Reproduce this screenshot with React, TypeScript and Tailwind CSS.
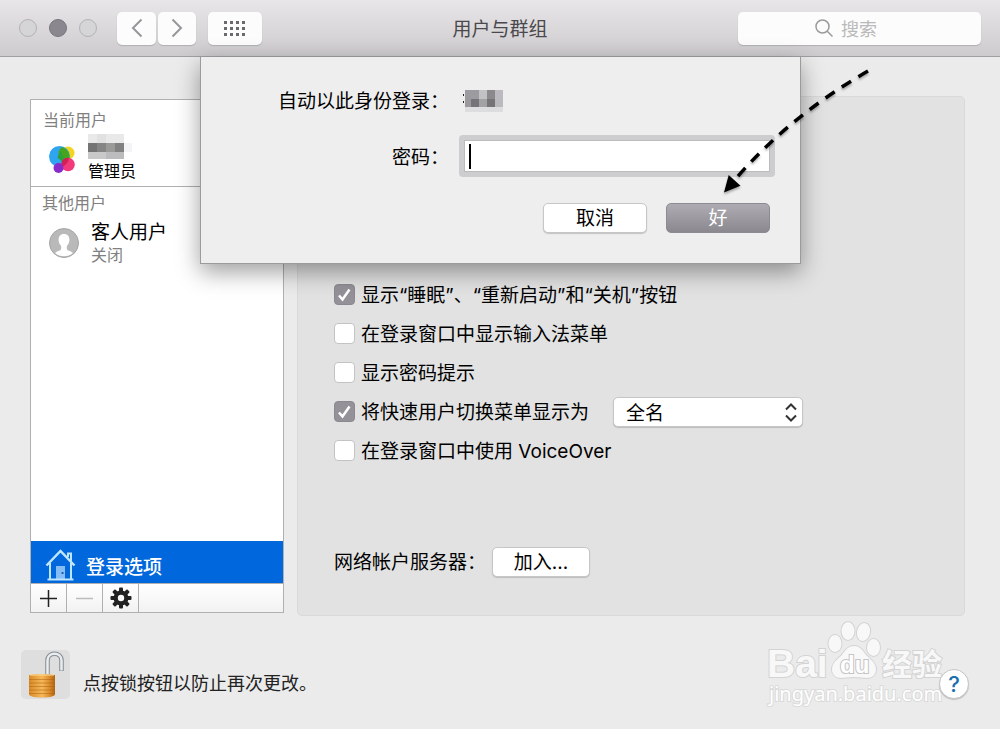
import { useState } from 'react';
import type { ReactNode } from 'react';

interface LoginOption {
  id: string;
  label: ReactNode;
  checked: boolean;
  hasMenu?: boolean;
}

const loginOptions: LoginOption[] = [
  { id: 'power-buttons', label: '显示“睡眠”、“重新启动”和“关机”按钮', checked: true },
  { id: 'input-menu', label: '在登录窗口中显示输入法菜单', checked: false },
  { id: 'password-hint', label: '显示密码提示', checked: false },
  { id: 'fast-switch', label: '将快速用户切换菜单显示为', checked: true, hasMenu: true },
  { id: 'voice-over', label: '在登录窗口中使用 VoiceOver', checked: false },
];

function TitleBar() {
  return (
    <header className="grid grid-cols-[1fr_auto_1fr] items-center h-[57px] px-[19px] border-b border-[#a19fa3] bg-linear-to-b from-[#e8e6e8] to-[#cdcbce]">
      <div className="flex items-center">
        <div className="flex gap-3 mr-5">
          <button aria-label="关闭" className="size-[18px] rounded-full border border-[#b4b2b5] bg-[#d5d4d6]" />
          <button aria-label="最小化" className="size-[18px] rounded-full border border-[#77757b] bg-[#8a888e]" />
          <button aria-label="缩放" className="size-[18px] rounded-full border border-[#b4b2b5] bg-[#d5d4d6]" />
        </div>
        <div className="flex gap-[2px] mr-3">
          <button aria-label="后退" className="flex items-center justify-center w-[39px] h-[33px] rounded-[5px] bg-[#fcfcfc] shadow-[0_1px_1px_#b0aeb1]">
            <svg width="12" height="20" viewBox="0 0 12 20" fill="none" stroke="#98969a" strokeWidth="2">
              <path d="M10.5 1.5 2 10l8.5 8.5" />
            </svg>
          </button>
          <button aria-label="前进" className="flex items-center justify-center w-[38px] h-[33px] rounded-[5px] bg-[#fcfcfc] shadow-[0_1px_1px_#b0aeb1]">
            <svg width="12" height="20" viewBox="0 0 12 20" fill="none" stroke="#98969a" strokeWidth="2">
              <path d="M1.5 1.5 10 10l-8.5 8.5" />
            </svg>
          </button>
        </div>
        <button aria-label="显示全部" className="flex items-center justify-center w-[54px] h-[33px] rounded-[5px] bg-[#fcfcfc] shadow-[0_1px_1px_#b0aeb1]">
          <svg width="22" height="15" viewBox="0 0 22 15" fill="#6b696d">
            {[0, 6, 12].map((y) => [0, 6, 12, 18].map((x) => <rect key={`${x}-${y}`} x={x} y={y} width="3" height="3" />))}
          </svg>
        </button>
      </div>
      <h1 className="pt-1 text-[19px] text-[#4a484c]">用户与群组</h1>
      <label className="flex items-center justify-self-end gap-2 w-[243px] h-[33px] pl-[77px] rounded-[5px] bg-[#fcfcfc] shadow-[0_1px_1px_#b0aeb1]">
        <svg className="shrink-0" width="18" height="18" viewBox="0 0 18 18" fill="none" stroke="#9b9a9c" strokeWidth="1.5">
          <circle cx="7.5" cy="7.5" r="6.5" />
          <path d="m12 12 5.5 5.5" />
        </svg>
        <input type="search" aria-label="搜索" placeholder="搜索" className="w-full min-w-0 pt-[2px] text-[18px] outline-none placeholder:text-[#b9b9b9]" />
      </label>
    </header>
  );
}

function Sidebar() {
  return (
    <aside className="flex flex-col w-[254px] shrink-0 my-[3px] border border-[#b0b0b0] bg-white">
      {/* Current user */}
      <section className="h-[87px] pt-2 border-b border-[#b0b0b0]">
        <h2 className="pl-3 text-base leading-6 text-[#808080]">当前用户</h2>
        <div className="flex items-center gap-[13px] pl-[18px]">
          <svg className="mt-1" width="26" height="28" viewBox="0 0 26 28">
            <circle cx="19" cy="7" r="6.5" fill="#f2d520" />
            <circle cx="10.5" cy="10.5" r="10.5" fill="#2fa5f1" />
            <path d="M13 1a10.5 10.5 0 0 1 7.500 12.400A6.500 6.500 0 0 1 13 1Z" fill="#45a51e" />
            <path d="M12.800 5.200a6.500 6.500 0 0 0 6.700 8.200 10 10 0 0 1-5.800 7 9 9 0 0 0-5.200-8.400 9 9 0 0 1 4.300-6.800Z" fill="#2aa13a" />
            <circle cx="19" cy="18.5" r="6.8" fill="#f4387c" />
            <path d="M12.500 16.500a6.800 6.800 0 0 1 7.500-4.700 10.500 10.500 0 0 1-7 8.900Z" fill="#cf2156" />
            <circle cx="9.5" cy="22" r="5" fill="#8a2bc9" />
          </svg>
          <div>
            <svg className="block" width="44" height="27" viewBox="0 0 44 27" shapeRendering="crispEdges">
              <rect x="0" width="36" height="9" y="2" fill="#e9e9e9" />
              <rect x="9" width="9" height="9" y="2" fill="#e1e1e1" />
              <rect x="0" width="9" height="9" y="11" fill="#747474" />
              <rect x="9" width="9" height="9" y="11" fill="#858585" />
              <rect x="18" width="9" height="9" y="11" fill="#9a9a98" />
              <rect x="27" width="9" height="9" y="11" fill="#818181" />
              <rect x="36" width="8" height="9" y="11" fill="#f4f4f6" />
              <rect x="0" width="18" height="7" y="20" fill="#c9c9c9" />
              <rect x="18" width="18" height="7" y="20" fill="#bcbbbe" />
            </svg>
            <p className="text-base leading-6">管理员</p>
          </div>
        </div>
      </section>

      {/* Other users */}
      <section className="flex-1 pt-1">
        <h2 className="pl-[11px] text-base leading-6 text-[#808080]">其他用户</h2>
        <div className="flex items-center gap-3 mt-[6px] pl-[18px]">
          <svg width="30" height="30" viewBox="0 0 30 30">
            <circle cx="15" cy="15" r="14.5" fill="#b9b9b9" stroke="#a5a5a5" />
            <path d="M15 6c-4 0-5.600 2.800-5.400 6.200.1 2.600 1.200 4.300 2.400 5.500.5 3 .1 4.200-1.300 4.900-2 .9-3.400 1.200-4.700 2.400a14 14 0 0 0 18 0c-1.300-1.200-2.700-1.500-4.700-2.400-1.400-.7-1.800-1.900-1.300-4.900 1.200-1.200 2.300-2.900 2.400-5.500C20.600 8.800 19 6 15 6Z" fill="#fff" />
          </svg>
          <div>
            <p className="text-[19px] leading-6">客人用户</p>
            <p className="text-base leading-5 text-[#808080]">关闭</p>
          </div>
        </div>
      </section>

      <button className="flex items-center gap-[10px] h-[42px] pl-[14px] pt-3 bg-[#0067dc] text-[19px] font-medium text-white">
        <svg className="-mt-2" width="31" height="33" viewBox="0 0 31 33" fill="none" stroke="#bfe6ff" strokeWidth="2">
          <path d="M11 18h9v13h-9z" fill="#86bdf5" stroke="none" />
          <path d="M17.500 24v2" stroke="#1a5fb4" />
          <path d="M1.500 17.500 15.500 3l14 14.500" strokeWidth="2.500" />
          <path d="M23 9V5.500h3V13M5 15v16M26 15v16M2.500 31.500h26" />
        </svg>
        登录选项
      </button>

      {/* List toolbar */}
      <div className="flex h-[29px] border-t border-[#b0b0b0] bg-linear-to-b from-white to-[#f2f2f2]">
        <button aria-label="添加用户" className="flex items-center justify-center w-9 border-r border-[#b0b0b0]">
          <svg width="17" height="17" viewBox="0 0 17 17" stroke="#222" strokeWidth="1.5">
            <path d="M0 8.500h17M8.500 0v17" />
          </svg>
        </button>
        <button aria-label="移除用户" className="flex items-center justify-center w-9 border-r border-[#b0b0b0]">
          <svg width="17" height="17" viewBox="0 0 17 17" stroke="#bcbcbc" strokeWidth="1.5">
            <path d="M0 8.500h17" />
          </svg>
        </button>
        <button aria-label="更多操作" className="flex items-center justify-center w-9 border-r border-[#b0b0b0]">
          <svg width="22" height="22" viewBox="-11 -11 22 22">
            {[0, 45, 90, 135].map((angle) => (
              <rect key={angle} x="-2" y="-10.5" width="4" height="21" rx="1" fill="#222" transform={`rotate(${angle})`} />
            ))}
            <circle r="7.5" fill="#222" />
            <circle r="3.2" fill="#fafafa" />
          </svg>
        </button>
      </div>
    </aside>
  );
}

function OptionRow({ option }: { option: LoginOption }) {
  const [checked, setChecked] = useState(option.checked);

  return (
    <div className="flex items-center h-[39px]">
      <div className="relative size-[21px] mr-[6px]">
        <input
          id={option.id}
          type="checkbox"
          checked={checked}
          onChange={() => setChecked(!checked)}
          className="block size-[21px] appearance-none rounded-[4px] border border-[#c3c3c3] bg-white checked:border-[#8b898f] checked:bg-[#949298]"
        />
        {checked && (
          <svg className="absolute inset-0 pointer-events-none" width="21" height="21" viewBox="0 0 21 21" fill="none" stroke="#fff" strokeWidth="2.5">
            <path d="m5 11.500 3.500 4L15.500 5.500" />
          </svg>
        )}
      </div>
      <label htmlFor={option.id} className="pt-1">{option.label}</label>
      {option.hasMenu && (
        <div className="relative ml-6">
          <select aria-label="菜单显示方式" className="block w-[190px] h-[30px] pl-3 pt-[2px] appearance-none rounded-[5px] border border-[#c6c6c6] bg-white shadow-[0_1px_1px_#bdbdbd]">
            <option>全名</option>
            <option>简称</option>
            <option>图标</option>
          </select>
          <svg className="absolute right-[6px] top-[6px] pointer-events-none" width="12" height="19" viewBox="0 0 12 19" fill="none" stroke="#333" strokeWidth="2">
            <path d="m1 6.500 5-5 5 5M1 12.500l5 5 5-5" />
          </svg>
        </div>
      )}
    </div>
  );
}

function LoginPanel() {
  return (
    <section className="flex-1 pt-[178px] pl-9 pb-9 rounded-[5px] border border-[#d9d9d9] bg-[#e2e2e2] text-[19px]">
      {loginOptions.map((option) => (
        <OptionRow key={option.id} option={option} />
      ))}
      <div className="flex items-center mt-[77px]">
        <span className="pt-[2px]">网络帐户服务器：</span>
        <button className="w-[98px] h-[30px] ml-[6px] rounded-[5px] border border-[#c6c6c6] bg-white leading-none shadow-[0_1px_1px_#bdbdbd]">加入...</button>
      </div>
    </section>
  );
}

function PasswordSheet() {
  return (
    <div className="relative w-[601px] pt-[33px] pb-[30px] bg-[#eee] text-[19px] border-x border-b border-[#9b9b9b] shadow-[0_8px_22px_rgba(0,0,0,0.38)]">
      <form className="grid grid-cols-[248px_1fr] items-center gap-x-[10px] pr-[25px]" onSubmit={(e) => e.preventDefault()}>
        <span className="h-[22px] leading-6 text-right">自动以此身份登录：</span>
        <svg className="ml-1" width="42" height="22" viewBox="0 0 42 22" shapeRendering="crispEdges">
          <path d="M0 4h1v2H0zM0 11h1v2H0z" fill="#222" />
          <rect x="2" width="14" height="9" fill="#9c9b9f" />
          <rect x="16" width="8" height="9" fill="#c2c2c5" />
          <rect x="24" width="8" height="9" fill="#8b898b" />
          <rect x="32" width="8" height="9" fill="#bcbac0" />
          <rect x="2" y="9" width="6" height="8" fill="#9b999e" />
          <rect x="8" y="9" width="8" height="8" fill="#757279" />
          <rect x="16" y="9" width="8" height="8" fill="#a2a1a4" />
          <rect x="24" y="9" width="8" height="8" fill="#777475" />
          <rect x="32" y="9" width="8" height="8" fill="#bab9be" />
          <rect x="2" y="17" width="38" height="5" fill="#dddddf" />
        </svg>
        <label htmlFor="password" className="mt-[23px] pt-1 text-right">密码：</label>
        <div className="relative mt-[23px] p-[5px] rounded-[4px] bg-[#cdcdd0]">
          <input id="password" type="password" className="block w-full h-8 px-2 border border-[#bcbcbf] bg-white outline-none caret-transparent" />
          <span className="absolute left-[10px] top-[9px] w-[2px] h-[25px] bg-black" />
        </div>
        <div className="col-span-2 flex justify-end gap-[19px] mt-[26px] mr-[5px]">
          <button type="button" className="w-[104px] h-[30px] rounded-[5px] border border-[#c6c6c6] bg-white leading-none shadow-[0_1px_1px_#c4c4c4]">取消</button>
          <button type="submit" className="w-[104px] h-[30px] rounded-[5px] border border-[#8d8b91] bg-linear-to-b from-[#aeacb2] to-[#8b898f] leading-none text-white">好</button>
        </div>
      </form>

      {/* Dashed arrow pointing at the confirm button */}
      <svg className="absolute left-[515px] top-[3px] pointer-events-none drop-shadow-[0_2px_1px_rgba(0,0,0,0.3)]" width="160" height="140" viewBox="716 60 160 140" fill="none">
        <path d="M868 71Q788 117 732 183" stroke="#000" strokeWidth="3.5" strokeDasharray="11 8.600" />
        <path d="m724 192.500 4.700-17.500 11.800 10.800Z" fill="#000" />
      </svg>
    </div>
  );
}

function Watermark() {
  return (
    <svg className="absolute right-0 bottom-0 pointer-events-none" width="260" height="129" viewBox="0 0 260 129" fill="#f8f8f8" stroke="#d3d3d3" strokeWidth="2" paintOrder="stroke">
      <ellipse cx="95" cy="43.5" rx="6.5" ry="8.5" />
      <ellipse cx="108" cy="31" rx="6.5" ry="9" />
      <ellipse cx="123.5" cy="32" rx="6.5" ry="9" transform="rotate(12 123.500 32)" />
      <ellipse cx="133.5" cy="47.5" rx="6.5" ry="8.5" />
      <path d="M114 46c5 0 8 3 11 7.500 3 4.500 11 8 11 16 0 5-4 8.500-9 8.500-4 0-8-1-13-1s-9 1-13 1c-5 0-9-3.500-9-8.500 0-8 8-11.500 11-16 3-4.500 6-7.500 11-7.500Z" />
      <text x="27" y="77" fontSize="39" fontWeight="700" fontFamily="Liberation Sans, sans-serif">Bai</text>
      <text x="100" y="73" fontSize="24" fontWeight="700" fontFamily="Liberation Sans, sans-serif" fill="#fff" stroke="#c4c4c4">du</text>
      <text x="142" y="75" fontSize="30" fontWeight="700" fontFamily="Noto Sans CJK SC, sans-serif">经验</text>
      <text x="29" y="101" fontSize="20" fontFamily="Noto Sans, sans-serif" fill="#fff" stroke="#dadada">jingyan.baidu.com</text>
    </svg>
  );
}

function Footer() {
  return (
    <footer className="flex items-end mt-[34px] mb-[30px] pl-[21px] pr-[31px]">
      <button aria-label="锁定" className="size-[49px] rounded-[5px] bg-[#dedede]">
        <svg width="49" height="49" viewBox="0 0 49 49" fill="none">
          <defs>
            <linearGradient id="brass" x1="0" x2="1" y1="0" y2="0">
              <stop offset="0" stopColor="#d98a26" />
              <stop offset="0.5" stopColor="#f6b85a" />
              <stop offset="0.75" stopColor="#e09232" />
              <stop offset="1" stopColor="#b3640f" />
            </linearGradient>
          </defs>
          <path d="M26.500 24V10.500C26.500 1.500 40.500 1.500 40.500 10.500V21" stroke="#858c93" strokeWidth="4.5" />
          <path d="M26.500 24V10.500C26.500 1.500 40.500 1.500 40.500 10.500V20.500" stroke="#e9edf0" strokeWidth="2.5" />
          <path d="M8 25c5-1.500 21-1.500 26 0v19c0 2-4 3.500-13 3.500S8 46 8 44Z" fill="url(#brass)" />
          <path d="M8 29.500h26M8 33h26M8 36.500h26M8 40h26M8 43.500h26" stroke="#a9600f" opacity="0.5" />
          <path d="M9 25h24" stroke="#ffe0a0" />
        </svg>
      </button>
      <p className="ml-[13px] text-[18px] leading-[30px] text-[#222]">点按锁按钮以防止再次更改。</p>
      <button aria-label="帮助" className="relative z-10 size-[30px] ml-auto rounded-full border border-[#c6c6c6] bg-white text-[22px] font-medium leading-none text-[#1b6fae] shadow-[0_1px_1px_#bdbdbd]">?</button>
    </footer>
  );
}

export default function App() {
  return (
    <div className="relative flex flex-col min-h-screen bg-[#ebebeb] text-black font-[Inter,'Noto_Sans_CJK_SC',sans-serif]">
      <TitleBar />
      <main className="flex flex-1 gap-[13px] pt-[39px] pl-[30px] pr-[35px]">
        <Sidebar />
        <LoginPanel />
      </main>
      <Footer />
      <Watermark />
      <div className="absolute inset-x-0 top-[57px] flex justify-center pl-px">
        <PasswordSheet />
      </div>
    </div>
  );
}
